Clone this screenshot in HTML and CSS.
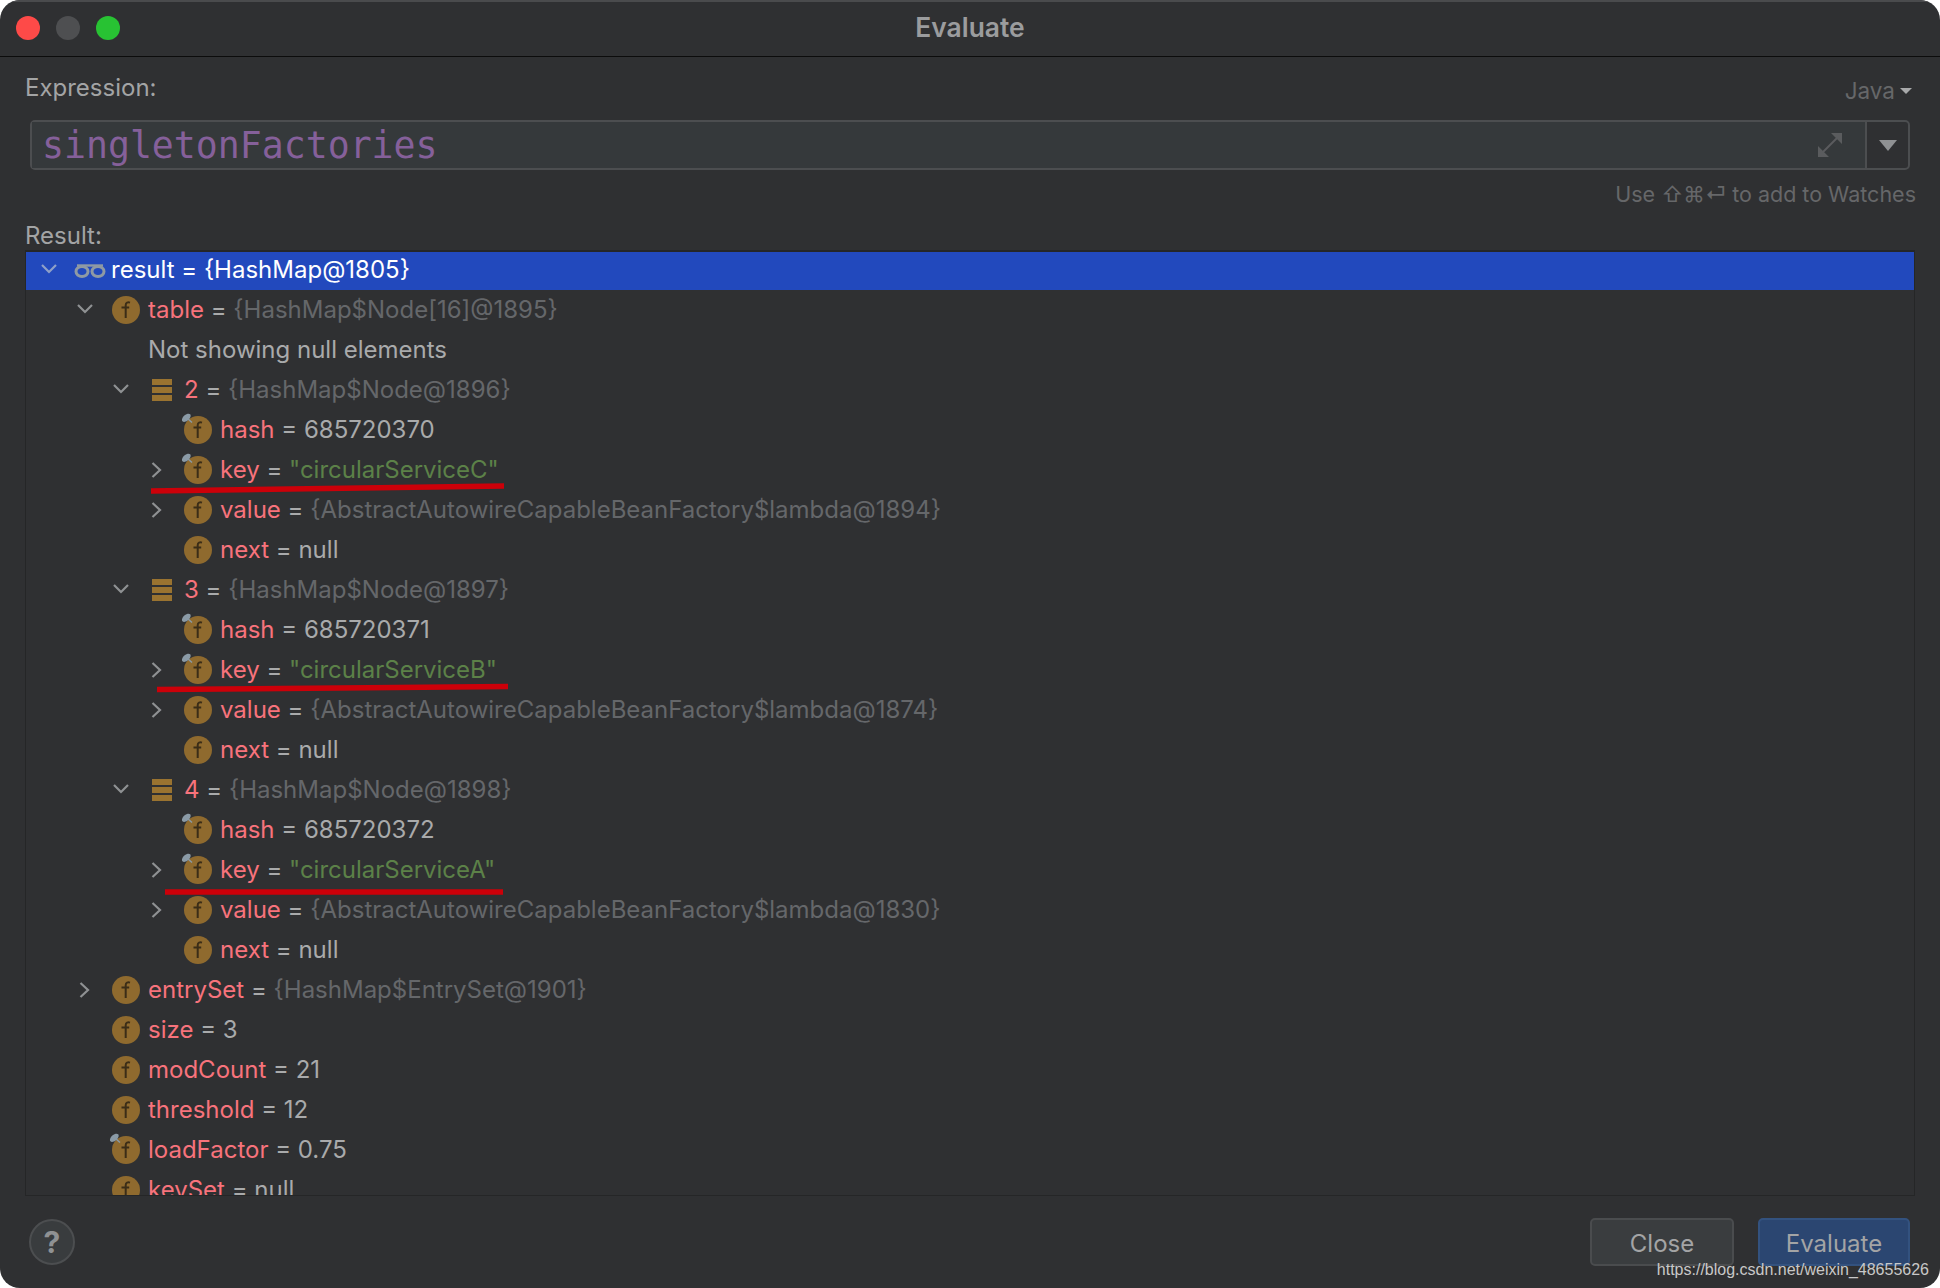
FILE: index.html
```html
<!DOCTYPE html>
<html lang="en">
<head>
<meta charset="utf-8">
<title>Evaluate</title>
<link rel="stylesheet" href="styles.css">
</head>
<body>
<svg class="defs" width="0" height="0" aria-hidden="true">
  <symbol id="down" viewBox="0 0 16 10"><path d="M1 1l7 7 7-7" fill="none" stroke="currentColor" stroke-width="2.2"/></symbol>
  <symbol id="right" viewBox="0 0 11 16"><path d="M1.500 1l7.500 7-7.500 7" fill="none" stroke="currentColor" stroke-width="2.2"/></symbol>
  <symbol id="field" viewBox="0 0 28 28">
    <circle cx="14" cy="14" r="14" fill="#8f6a2e"/>
    <path d="M18 6.600c-2.100-.6-4.300-.1-4.300 2.600V22M9.500 11.500h7.700" fill="none" stroke="#3b2d17" stroke-width="2"/>
  </symbol>
  <symbol id="pinned" viewBox="-3 -3 31 31">
    <circle cx="14" cy="14" r="14" fill="#8f6a2e"/>
    <path d="M18 6.600c-2.100-.6-4.300-.1-4.300 2.600V22M9.500 11.500h7.700" fill="none" stroke="#3b2d17" stroke-width="2"/>
    <path d="M3 2l5 4.500" stroke="#8a9aa6" stroke-width="1.500"/>
    <ellipse cx="2.300" cy="1.800" rx="5.200" ry="3" transform="rotate(-42 2.300 1.800)" fill="#8a9aa6"/>
  </symbol>
  <symbol id="array" viewBox="0 0 20 22">
    <path d="M0 0h20v6H0zM0 8h20v6H0zM0 16h20v6H0z" fill="#9a7330"/>
  </symbol>
</svg>

<main class="window">
  <header class="titlebar">
    <div class="lights"><span class="light red"></span><span class="light gray"></span><span class="light green"></span></div>
    <div class="title">Evaluate</div>
    <div class="lights-spacer"></div>
  </header>

  <section class="content">
    <div class="expr-head">
      <span class="label">Expression:</span>
      <span class="lang">Java<i class="caret-small"></i></span>
    </div>
    <div class="expr-box">
      <div class="expr-input">
        <span class="expr-text">singletonFactories</span>
        <svg class="expand" width="24" height="24" viewBox="0 0 24 24"><path d="M13 0h11v11zM0 13v11h11z" fill="#5a5c5e"/><path d="M19 5L5 19" stroke="#5a5c5e" stroke-width="2"/></svg>
      </div>
      <div class="expr-drop"><i class="caret"></i></div>
    </div>
    <div class="hint">Use ⇧⌘⏎ to add to Watches</div>
    <div class="label result-label">Result:</div>

    <div class="tree-wrap">
      <div class="tree">
        <div class="row first selected i0"><span class="tw"><svg class="dn"><use href="#down"/></svg></span>
          <svg class="glasses" width="32" height="15" viewBox="0 0 32 15"><ellipse cx="8" cy="8.500" rx="6" ry="5" fill="none" stroke="#8f9aa4" stroke-width="3"/><ellipse cx="24" cy="8.500" rx="6" ry="5" fill="none" stroke="#8f9aa4" stroke-width="3"/><path d="M3 2.500h26" fill="none" stroke="#8f9aa4" stroke-width="2.400"/></svg>
          <span class="plain-white">result = {HashMap@1805}</span></div>

        <div class="row i1"><span class="tw"><svg class="dn"><use href="#down"/></svg></span><svg class="ic"><use href="#field"/></svg><span class="n">table</span><span class="o"> = </span><span class="g">{HashMap$Node[16]@1895}</span></div>
        <div class="row i1"><span class="tw"></span><span class="ic-sp"></span><span class="o">Not showing null elements</span></div>

        <div class="row i2"><span class="tw"><svg class="dn"><use href="#down"/></svg></span><svg class="ar"><use href="#array"/></svg><span class="n">2</span><span class="o"> = </span><span class="g">{HashMap$Node@1896}</span></div>
        <div class="row i3"><span class="tw"></span><svg class="ic pin"><use href="#pinned"/></svg><span class="n">hash</span><span class="o"> = 685720370</span></div>
        <div class="row i3"><span class="tw"><svg class="rt"><use href="#right"/></svg></span><svg class="ic pin"><use href="#pinned"/></svg><span class="n">key</span><span class="o"> = </span><span class="s">"circularServiceC"</span></div>
        <div class="row i3"><span class="tw"><svg class="rt"><use href="#right"/></svg></span><svg class="ic"><use href="#field"/></svg><span class="n">value</span><span class="o"> = </span><span class="g">{AbstractAutowireCapableBeanFactory$lambda@1894}</span></div>
        <div class="row i3"><span class="tw"></span><svg class="ic"><use href="#field"/></svg><span class="n">next</span><span class="o"> = null</span></div>

        <div class="row i2"><span class="tw"><svg class="dn"><use href="#down"/></svg></span><svg class="ar"><use href="#array"/></svg><span class="n">3</span><span class="o"> = </span><span class="g">{HashMap$Node@1897}</span></div>
        <div class="row i3"><span class="tw"></span><svg class="ic pin"><use href="#pinned"/></svg><span class="n">hash</span><span class="o"> = 685720371</span></div>
        <div class="row i3"><span class="tw"><svg class="rt"><use href="#right"/></svg></span><svg class="ic pin"><use href="#pinned"/></svg><span class="n">key</span><span class="o"> = </span><span class="s">"circularServiceB"</span></div>
        <div class="row i3"><span class="tw"><svg class="rt"><use href="#right"/></svg></span><svg class="ic"><use href="#field"/></svg><span class="n">value</span><span class="o"> = </span><span class="g">{AbstractAutowireCapableBeanFactory$lambda@1874}</span></div>
        <div class="row i3"><span class="tw"></span><svg class="ic"><use href="#field"/></svg><span class="n">next</span><span class="o"> = null</span></div>

        <div class="row i2"><span class="tw"><svg class="dn"><use href="#down"/></svg></span><svg class="ar"><use href="#array"/></svg><span class="n">4</span><span class="o"> = </span><span class="g">{HashMap$Node@1898}</span></div>
        <div class="row i3"><span class="tw"></span><svg class="ic pin"><use href="#pinned"/></svg><span class="n">hash</span><span class="o"> = 685720372</span></div>
        <div class="row i3"><span class="tw"><svg class="rt"><use href="#right"/></svg></span><svg class="ic pin"><use href="#pinned"/></svg><span class="n">key</span><span class="o"> = </span><span class="s">"circularServiceA"</span></div>
        <div class="row i3"><span class="tw"><svg class="rt"><use href="#right"/></svg></span><svg class="ic"><use href="#field"/></svg><span class="n">value</span><span class="o"> = </span><span class="g">{AbstractAutowireCapableBeanFactory$lambda@1830}</span></div>
        <div class="row i3"><span class="tw"></span><svg class="ic"><use href="#field"/></svg><span class="n">next</span><span class="o"> = null</span></div>

        <div class="row i1"><span class="tw"><svg class="rt"><use href="#right"/></svg></span><svg class="ic"><use href="#field"/></svg><span class="n">entrySet</span><span class="o"> = </span><span class="g">{HashMap$EntrySet@1901}</span></div>
        <div class="row i1"><span class="tw"></span><svg class="ic"><use href="#field"/></svg><span class="n">size</span><span class="o"> = 3</span></div>
        <div class="row i1"><span class="tw"></span><svg class="ic"><use href="#field"/></svg><span class="n">modCount</span><span class="o"> = 21</span></div>
        <div class="row i1"><span class="tw"></span><svg class="ic"><use href="#field"/></svg><span class="n">threshold</span><span class="o"> = 12</span></div>
        <div class="row i1"><span class="tw"></span><svg class="ic pin"><use href="#pinned"/></svg><span class="n">loadFactor</span><span class="o"> = 0.75</span></div>
        <div class="row i1"><span class="tw"></span><svg class="ic"><use href="#field"/></svg><span class="n">keySet</span><span class="o"> = null</span></div>
      </div>
    </div>
  </section>

  <footer class="footer">
    <div class="help">?</div>
    <div class="buttons">
      <div class="btn">Close</div>
      <div class="btn primary">Evaluate</div>
    </div>
  </footer>

  <svg class="marks" width="1940" height="1288" viewBox="0 0 1940 1288" aria-hidden="true">
    <path d="M151 491L504 486" stroke="#cc0009" stroke-width="5.500"/>
    <path d="M157 689.500L508 686.500" stroke="#cc0009" stroke-width="5.500"/>
    <path d="M165 892L503 892" stroke="#cc0009" stroke-width="5.500"/>
  </svg>
  <div class="watermark">https://blog.csdn.net/weixin_48655626</div>
</main>
</body>
</html>
```
FILE: styles.css
```css
* { box-sizing: border-box; }
html, body { margin: 0; padding: 0; background: #fff; }
body { width: 1940px; height: 1288px; overflow: hidden; font-family: Inter, "Liberation Sans", sans-serif; }
.defs { position: absolute; }

.window {
  position: relative;
  width: 1940px;
  height: 1288px;
  background: #2f3032;
  border-radius: 20px;
  overflow: hidden;
  display: flex;
  flex-direction: column;
}

.titlebar {
  flex: none;
  height: 57px;
  padding: 0 16px;
  border-top: 2px solid #4a4b4d;
  border-bottom: 1px solid #0c0c0c;
  display: grid;
  grid-template-columns: 1fr auto 1fr;
  align-items: center;
}
.lights { display: flex; gap: 16px; }
.light { width: 24px; height: 24px; border-radius: 50%; display: block; margin-top: -3px; }
.red { background: #fe4a48; }
.gray { background: #4e4f51; }
.green { background: #28c233; }
.title { font-size: 26.4px; font-weight: 600; color: #9b9c9e; margin-top: -5px; }

.content { flex: none; height: 1139px; padding: 0 25px; display: flex; flex-direction: column; }
.expr-head { flex: none; height: 63px; display: flex; justify-content: space-between; align-items: flex-end; padding-bottom: 18px; }
.label { font-size: 24px; color: #a3a4a5; }
.lang { font-size: 22.5px; color: #666769; display: flex; align-items: center; gap: 5px; margin: 0 3px -2px 0; }
.caret-small { display: block; width: 0; height: 0; border: 6px solid transparent; border-top: 6px solid #a8a9aa; border-bottom: 0; }

.expr-box {
  flex: none;
  height: 50px;
  margin: 0 5px;
  border: 2px solid #4c4e50;
  border-radius: 5px;
  display: flex;
}
.expr-input {
  flex: 1;
  background: #35393b;
  display: flex;
  align-items: center;
  justify-content: space-between;
  padding: 0 23px 0 10px;
  border-right: 2px solid #4c4e50;
}
.expr-text { font-family: "DejaVu Sans Mono", "Liberation Mono", monospace; font-size: 36.5px; color: #85609a; line-height: 1; margin-top: 2px; }
.expr-drop { width: 41px; display: flex; align-items: center; justify-content: center; }
.caret { display: block; width: 0; height: 0; border: 9px solid transparent; border-top: 11px solid #8f9193; border-bottom: 0; }

.hint { flex: none; font-size: 21.5px; color: #666769; text-align: right; height: 30px; margin: 9px -1px 0 0; line-height: 30px; }
.result-label { flex: none; margin-top: 12px; height: 29px; line-height: 29px; }

.tree-wrap { flex: none; height: 946px; border: 1px solid #252627; border-top-width: 2px; overflow: hidden; }
.tree { display: flex; flex-direction: column; }
.row {
  flex: none;
  height: 40px;
  display: flex;
  align-items: center;
  font-size: 24px;
  white-space: pre;
  color: #a9aaab;
}
.row.first { height: 38px; }
.row > span:not(.tw):not(.ic-sp) { margin-top: -2px; }
.row.first > span:not(.tw) { margin-top: -4px; }
.row.first .tw { margin-top: -2px; }
.selected { background: #2249bd; }
.i0 { padding-left: 15px; }
.i1 { padding-left: 51px; }
.i2 { padding-left: 87px; }
.i3 { padding-left: 123px; }
.tw { width: 35px; flex: none; display: flex; align-items: center; color: #8f9193; }
.dn { width: 16px; height: 10px; margin-top: -3px; }
.rt { width: 11px; height: 16px; margin-left: 2px; }
.selected .tw { color: #8fa0c8; }
.ic-sp { width: 36px; flex: none; }
.ic { width: 28px; height: 28px; flex: none; margin-right: 8px; }
.ic.pin { width: 31px; height: 31px; margin: -3px 8px 0 -3px; }
.ar { width: 20px; height: 22px; flex: none; margin: 0 12px 0 4px; }
.glasses { flex: none; margin: -2px 5px 0 -2px; }
.plain-white { color: #fff; }
.n { color: #f7737c; }
.o { color: #a9aaab; }
.g { color: #65676a; }
.s { color: #5c8148; }

.footer { flex: 1; display: flex; justify-content: space-between; align-items: center; padding: 0 30px 0 29px; }
.help {
  width: 46px; height: 46px; border-radius: 50%;
  background: #393c3e; border: 2px solid #4c4e50;
  color: #8f9193; font-size: 30px; font-weight: 700;
  display: flex; align-items: center; justify-content: center;
}
.buttons { display: flex; gap: 24px; }
.btn {
  height: 48px; width: 144px;
  border-radius: 5px;
  background: #3a3d3f;
  border: 2px solid #4a4c4e;
  color: #a3a4a5;
  font-size: 24px;
  padding-top: 2px;
  display: flex; align-items: center; justify-content: center;
}
.btn.primary { width: 152px; background: #2b4671; border-color: #33527f; }

.marks { position: absolute; left: 0; top: 0; pointer-events: none; }
.watermark {
  position: absolute;
  right: 11px;
  bottom: 9px;
  font-family: "Liberation Sans", Arial, sans-serif;
  font-size: 16px;
  color: #c8c8c8;
}
```
